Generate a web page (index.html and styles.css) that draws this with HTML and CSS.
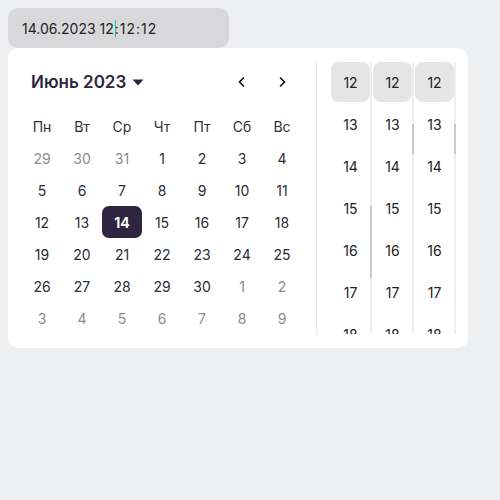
FILE: index.html
```html
<!DOCTYPE html>
<html lang="ru">
<head>
<meta charset="utf-8">
<link rel="stylesheet" href="styles.css">
</head>
<body>
<div class="field"><span>14.06.2023 12</span><span class="caret"></span><span class="rest">:12:12</span></div>
<div class="popup">
  <div class="calendar">
    <div class="head">
      <div class="month">Июнь 2023 <svg class="tri" width="12" height="7" viewBox="0 0 12 7"><path d="M0.5 0.5h11L6 6.5z" fill="#2e2540"/></svg></div>
      <div class="nav"><svg width="10" height="12" viewBox="0 0 10 12"><path d="M7 1.5L2.5 6L7 10.5" fill="none" stroke="#111" stroke-width="1.6"/></svg></div>
      <div class="nav"><svg width="10" height="12" viewBox="0 0 10 12"><path d="M3 1.5L7.5 6L3 10.5" fill="none" stroke="#111" stroke-width="1.6"/></svg></div>
    </div>
    <div class="grid">
      <div class="dn">Пн</div><div class="dn">Вт</div><div class="dn">Ср</div><div class="dn">Чт</div><div class="dn">Пт</div><div class="dn">Сб</div><div class="dn">Вс</div>
      <div class="d out">29</div><div class="d out">30</div><div class="d out">31</div><div class="d">1</div><div class="d">2</div><div class="d">3</div><div class="d">4</div>
      <div class="d">5</div><div class="d">6</div><div class="d">7</div><div class="d">8</div><div class="d">9</div><div class="d">10</div><div class="d">11</div>
      <div class="d">12</div><div class="d">13</div><div class="d sel">14</div><div class="d">15</div><div class="d">16</div><div class="d">17</div><div class="d">18</div>
      <div class="d">19</div><div class="d">20</div><div class="d">21</div><div class="d">22</div><div class="d">23</div><div class="d">24</div><div class="d">25</div>
      <div class="d">26</div><div class="d">27</div><div class="d">28</div><div class="d">29</div><div class="d">30</div><div class="d out">1</div><div class="d out">2</div>
      <div class="d out">3</div><div class="d out">4</div><div class="d out">5</div><div class="d out">6</div><div class="d out">7</div><div class="d out">8</div><div class="d out">9</div>
    </div>
  </div>
  <div class="times">
    <div class="col">
      <div class="cells"><div class="t on">12</div><div class="t">13</div><div class="t">14</div><div class="t">15</div><div class="t">16</div><div class="t">17</div><div class="t">18</div></div>
      <div class="track"><div class="thumb thumb-low"></div></div>
    </div>
    <div class="col">
      <div class="cells"><div class="t on">12</div><div class="t">13</div><div class="t">14</div><div class="t">15</div><div class="t">16</div><div class="t">17</div><div class="t">18</div></div>
      <div class="track"><div class="thumb thumb-high"></div></div>
    </div>
    <div class="col">
      <div class="cells"><div class="t on">12</div><div class="t">13</div><div class="t">14</div><div class="t">15</div><div class="t">16</div><div class="t">17</div><div class="t">18</div></div>
      <div class="track"><div class="thumb thumb-high"></div></div>
    </div>
  </div>
</div>
</body>
</html>
```
FILE: styles.css
```css
* { box-sizing: border-box; }
body {
  margin: 0;
  padding: 8px;
  background: #eeeff1;
  font-family: Inter, "Noto Sans", sans-serif;
  color: #2b2a33;
}
.field {
  width: 221px;
  height: 40px;
  background: #d8d8da;
  border-radius: 10px;
  padding-left: 14px;
  display: flex;
  align-items: center;
  font-size: 14px;
  color: #222;
}
.caret {
  width: 1px;
  height: 17px;
  background: #17c9a0;
  margin: 0 -1px 0 1px;
}
.rest { letter-spacing: 1px; }
.popup {
  width: 460px;
  height: 300px;
  background: #fff;
  border-radius: 10px;
  display: flex;
  padding: 14px 11px 14px 14px;
}
.calendar {
  width: 295px;
  padding-right: 14px;
  border-right: 1px solid #e9e9ec;
}
.head {
  height: 40px;
  display: flex;
  align-items: center;
}
.month {
  flex: 1;
  padding-left: 9px;
  font-size: 17px;
  font-weight: 600;
  color: #2e2540;
  display: flex;
  align-items: center;
  gap: 6px;
}
.tri { margin-top: 1px; }
.nav {
  width: 40px;
  height: 40px;
  display: flex;
  align-items: center;
  justify-content: center;
}
.grid {
  margin-top: 8px;
  display: grid;
  grid-template-columns: repeat(7, 40px);
  grid-auto-rows: 32px;
}
.dn, .d {
  display: flex;
  align-items: center;
  justify-content: center;
  font-size: 14px;
}
.dn { color: #2f2f37; }
.d { color: #2b2a38; }
.d.out { color: #8b8b90; }
.d.sel {
  background: #2e2540;
  color: #fff;
  font-weight: 700;
  border-radius: 7px;
}
.times {
  display: flex;
  padding-left: 14px;
  height: 272px;
}
.col {
  display: flex;
  width: 42px;
  height: 272px;
  overflow: hidden;
}
.cells {
  width: 39px;
  display: flex;
  flex-direction: column;
  gap: 2px;
}
.t {
  flex: none;
  height: 40px;
  display: flex;
  align-items: center;
  justify-content: center;
  font-size: 14px;
  color: #222;
}
.t.on {
  background: #e5e5e6;
  border-radius: 8px;
}
.track {
  width: 2px;
  height: 272px;
  background: #efeff0;
  position: relative;
}
.thumb {
  position: absolute;
  left: 0;
  width: 2px;
  background: #c9c9cb;
}
.thumb-low { top: 144px; height: 72px; }
.thumb-high { top: 62px; height: 30px; }
```
